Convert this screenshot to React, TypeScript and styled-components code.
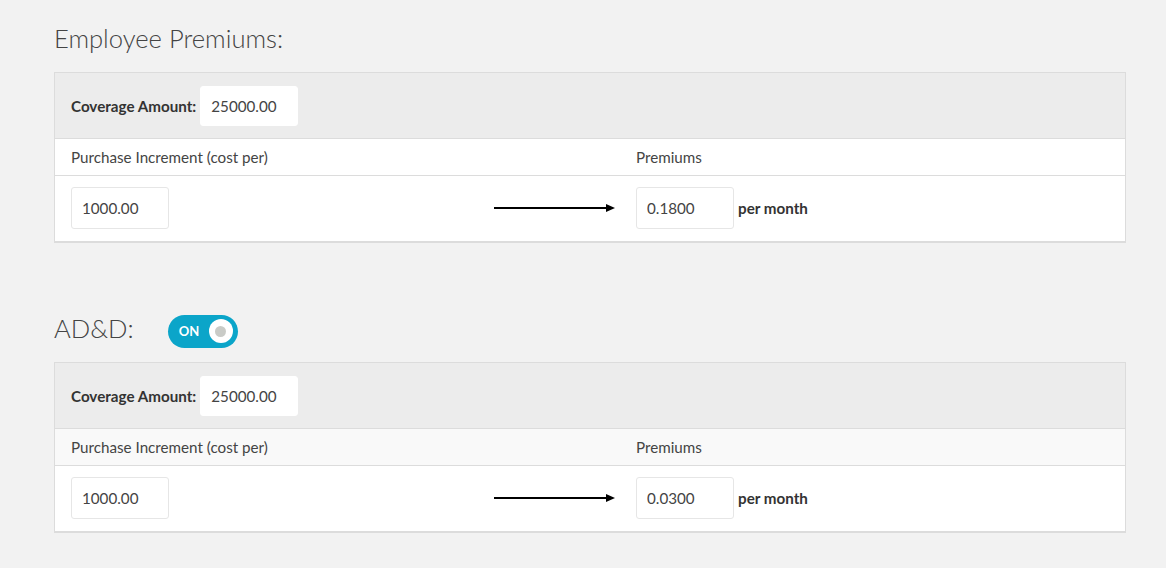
import React from 'react';
import styled, { createGlobalStyle } from 'styled-components';

const GlobalStyle = createGlobalStyle`
  body {
    margin: 0;
    background: #f2f2f2;
    font-family: Lato, "Open Sans", "Liberation Sans", sans-serif;
    color: #444;
  }
`;

type Plan = {
  coverage: string;
  increment: string;
  premium: string;
};

export default function App() {
  return (
    <>
      <GlobalStyle />
      <Page>
        <TitleRow $top={24}>
          <Title>Employee Premiums:</Title>
        </TitleRow>
        <PremiumPanel plan={{ coverage: '25000.00', increment: '1000.00', premium: '0.1800' }} />

        <TitleRow $top={71}>
          <Title>AD&amp;D:</Title>
          <Toggle>
            <ToggleText>ON</ToggleText>
            <Knob>
              <KnobDot />
            </Knob>
          </Toggle>
        </TitleRow>
        <PremiumPanel plan={{ coverage: '25000.00', increment: '1000.00', premium: '0.0300' }} shaded />
      </Page>
    </>
  );
}

function PremiumPanel({ plan, shaded }: { plan: Plan; shaded?: boolean }) {
  return (
    <Panel>
      <CoverageRow>
        <Label>Coverage Amount:</Label>
        <Input defaultValue={plan.coverage} $plain />
      </CoverageRow>
      <HeaderRow $shaded={shaded}>
        <Cell>Purchase Increment (cost per)</Cell>
        <Cell>Premiums</Cell>
      </HeaderRow>
      <BodyRow>
        <ArrowCell>
          <Input defaultValue={plan.increment} />
          <Arrow width="122" height="10" viewBox="0 0 122 10">
            <line x1="0" y1="5" x2="114" y2="5" stroke="#000" strokeWidth="2" />
            <polygon points="112,1 121,5 112,9" fill="#000" />
          </Arrow>
        </ArrowCell>
        <Cell>
          <Input defaultValue={plan.premium} />
          <PerMonth>per month</PerMonth>
        </Cell>
      </BodyRow>
    </Panel>
  );
}

export const Page = styled.div`
  padding: 0 40px 36px 54px;
`;

export const TitleRow = styled.div<{ $top: number }>`
  display: flex;
  align-items: center;
  gap: 34px;
  height: 34px;
  margin-top: ${(p) => p.$top}px;
  margin-bottom: 14px;
`;

export const Title = styled.h2`
  margin: -7px 0 0;
  font-size: 25.6px;
  line-height: 32px;
  font-weight: 300;
  color: #444;
`;

export const Toggle = styled.div`
  width: 70px;
  height: 33px;
  border-radius: 17px;
  background: #0ba5c9;
  display: flex;
  align-items: center;
  justify-content: space-between;
  padding: 0 5px 0 11px;
  box-sizing: border-box;
`;

export const ToggleText = styled.span`
  color: #fff;
  font-size: 13px;
  font-weight: 700;
`;

export const Knob = styled.span`
  width: 24px;
  height: 24px;
  border-radius: 50%;
  background: #fff;
  display: flex;
  align-items: center;
  justify-content: center;
`;

export const KnobDot = styled.span`
  width: 11px;
  height: 11px;
  border-radius: 50%;
  background: #c9cbc7;
`;

export const Panel = styled.div`
  border: 1px solid #dcdcdc;
  border-bottom-width: 2px;
  background: #fff;
`;

export const CoverageRow = styled.div`
  display: flex;
  align-items: center;
  gap: 4px;
  background: #ececec;
  padding: 13px 16px 12px;
  border-bottom: 1px solid #dcdcdc;
`;

export const Label = styled.span`
  font-size: 15.2px;
  font-weight: 700;
  color: #333;
`;

export const Input = styled.input<{ $plain?: boolean }>`
  width: 98px;
  height: ${(p) => (p.$plain ? 40 : 42)}px;
  box-sizing: border-box;
  border: 1px solid ${(p) => (p.$plain ? '#fff' : '#e6e6e6')};
  border-radius: 3px;
  background: #fff;
  padding: 0 10px;
  font-family: inherit;
  font-size: 15.2px;
  color: #444;
  outline: none;
`;

export const HeaderRow = styled.div<{ $shaded?: boolean }>`
  display: grid;
  grid-template-columns: 565px 1fr;
  height: 36px;
  align-items: center;
  background: ${(p) => (p.$shaded ? '#f9f9f9' : '#fff')};
  border-bottom: 1px solid #dcdcdc;
  font-size: 15.2px;
  color: #444;
`;

export const BodyRow = styled.div`
  display: grid;
  grid-template-columns: 565px 1fr;
  align-items: center;
  padding: 11px 0 12px;
`;

export const Cell = styled.div`
  display: flex;
  align-items: center;
  gap: 4px;
  padding: 0 16px;
`;

export const ArrowCell = styled(Cell)`
  justify-content: space-between;
  padding-right: 4px;
`;

export const Arrow = styled.svg`
  display: block;
`;

export const PerMonth = styled.span`
  font-size: 15.2px;
  font-weight: 700;
  color: #333;
`;
